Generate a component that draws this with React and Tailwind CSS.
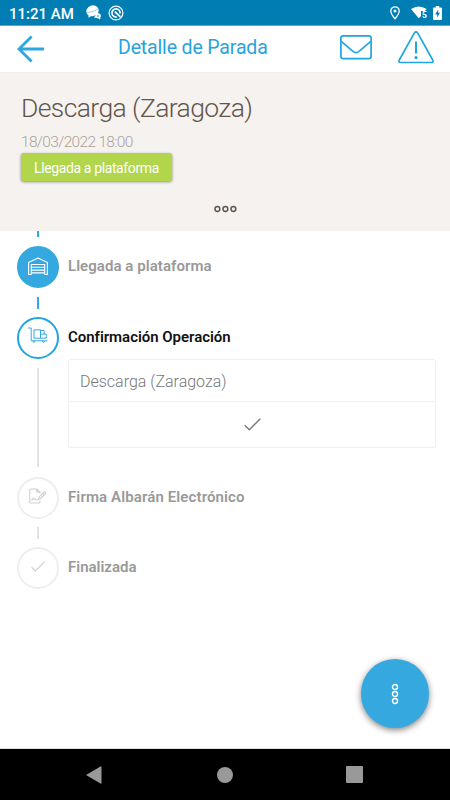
import React from 'react'

const ArrowIcon = () => (
  <svg width="28" height="28" viewBox="0 0 28 28" fill="none" stroke="#2ea7e0" strokeWidth="2.8">
    <path d="M14.6 1.6 2 14l12.6 12.4M2 14h25" />
  </svg>
)

const MailIcon = () => (
  <svg width="32" height="25" viewBox="0 0 32 25" fill="none" stroke="#21a5e0" strokeWidth="1.7" strokeLinejoin="round">
    <rect x="0.9" y="0.9" width="30.2" height="22.7" rx="2.2" />
    <path d="M1.2 6.4 12.4 15.8q4 3.6 7.2 0L30.8 6.4" />
  </svg>
)

const WarningIcon = () => (
  <svg width="36" height="33" viewBox="0 0 36 33" fill="none" stroke="#21a5e0" strokeWidth="1.7" strokeLinejoin="round">
    <path d="M16.4 1.9c.8-1.3 2.4-1.3 3.2 0L34.7 29c.8 1.3.1 2.5-1.4 2.5H2.7c-1.5 0-2.2-1.2-1.4-2.5Z" />
    <path d="M18 10.5v12" strokeWidth="2" />
    <circle cx="18" cy="26.6" r="1.6" fill="#21a5e0" stroke="none" />
  </svg>
)

const WarehouseIcon = () => (
  <svg width="20" height="18" viewBox="0 0 20 18" fill="none" stroke="#fff" strokeWidth="1.1">
    <path d="M3.3 17.5H.6v-12L10 1l9.4 4.5v12h-2.7" strokeLinejoin="round" />
    <path d="M3.3 17.5v-10h13.4v10M3.3 10.3h13.4M3.3 13.1h13.4M3.3 15.9h13.4" />
  </svg>
)

const CartIcon = () => (
  <svg width="20" height="17" viewBox="0 0 20 17" fill="none" stroke="#35a8e0" strokeWidth="1">
    <path d="M.2 1h3v12.8h16.3" />
    <path d="M6 2.8h6.5v8.4H6ZM12.5 3.5h3.6v3.6M12.5 7.1h5.8v4.1h-5.8" />
    <path d="M5 14v.8q.9 1.2 1.8 0V14M14.5 14v.8q.9 1.2 1.8 0V14" />
  </svg>
)

const SignIcon = () => (
  <svg width="18" height="16" viewBox="0 0 20 17" fill="none" stroke="#cfcfcf" strokeWidth="1.2" strokeLinejoin="round">
    <path d="M12.2 6V4L9 .8H1.8q-1 0-1 1v13.4q0 1 1 1h9.4q1 0 1-1v-1.6M8.6.8v3.6h3.6" />
    <path d="m10.5 12.5.8-2.7 5.4-5.5q.8-.7 1.5 0 .7.8 0 1.6l-5.3 5.5ZM15.3 5.6l1.8 1.7" />
    <path d="m2.8 13.6 2.1-3 1.2 2 1-1 1 1h2" />
  </svg>
)

const CheckIcon = ({ className }) => (
  <svg className={className} viewBox="0 0 17 13" fill="none" stroke="currentColor" strokeWidth="1.4">
    <path d="m.7 7.2 4.6 4.6L16.3.8" />
  </svg>
)

const StatusBar = () => (
  <div className="h-[26px] bg-[#007eb3] border-b border-[#5aa9cb] flex items-center text-white pl-[9px] pr-2">
    <span className="text-[15px] leading-[26px] font-medium w-[77px] pt-0.5 whitespace-nowrap">11:21 AM</span>
    <svg width="15" height="15" viewBox="0 0 15 15" fill="#fff">
      <ellipse cx="6.5" cy="5.8" rx="6.3" ry="5.3" transform="rotate(-20 6.5 5.8)" />
      <path d="M.5 7.6Q8 7.5 12.4 3.5" stroke="#007eb3" strokeWidth=".4" fill="none" />
      <path d="M2.5 9.5v3.3L6 10.5Z" />
      <path d="m8 12.5 3-4.5q3.5-.5 3.9 2.5L14 14.5l-2-1.2Z" />
      <circle cx="11.9" cy="11" r=".8" fill="#007eb3" />
    </svg>
    <svg className="ml-[7px]" width="16" height="16" viewBox="0 0 16 16" fill="none" stroke="#fff">
      <circle cx="8" cy="8" r="6.9" strokeWidth="1.2" />
      <path d="M8.8 12A4.1 4.1 0 1 1 12.1 8.5" strokeWidth="1.6" />
      <path d="m6.8 6.6 5.6 5.2" strokeWidth="1.8" />
    </svg>
    <div className="ml-auto flex items-center">
      <svg width="10" height="14" viewBox="0 0 10 14" fill="none" stroke="#fff" strokeWidth="1.3">
        <path d="M5 12.8Q.8 7.8.8 5a4.2 4.2 0 0 1 8.4 0Q9.2 7.8 5 12.8Z" />
        <circle cx="5" cy="5" r="1.5" fill="#fff" stroke="none" />
      </svg>
      <svg className="ml-[11px]" width="17" height="13" viewBox="0 0 17 13">
        <path d="M0 3Q7.8-2 15.6 3L13.8 5H10v5L7.8 12.3Z" fill="#fff" />
        <text x="11" y="12" fontSize="8.5" fontWeight="700" fill="#fff">5</text>
      </svg>
      <svg className="ml-[5px]" width="9" height="14" viewBox="0 0 9 14">
        <path d="M2.8 0h3.4v1.4H8q1 0 1 1V13q0 1-1 1H1q-1 0-1-1V2.4q0-1 1-1h1.8Z" fill="#fff" />
        <path d="M5.1 3.6 2.2 8.4h2v3.2l2.8-4.9H5.1Z" fill="#007eb3" />
      </svg>
    </div>
  </div>
)

const Header = () => (
  <div className="h-[46px] bg-white flex items-center pl-[17px] pr-4 pb-1">
    <span className="pt-1"><ArrowIcon /></span>
    <h1 className="ml-[73px] pt-px text-[19.5px] leading-none tracking-[-0.15px] text-[#27a4de] w-[222px] whitespace-nowrap">Detalle de Parada</h1>
    <MailIcon />
    <span className="ml-[26px]"><WarningIcon /></span>
  </div>
)

const Summary = () => (
  <div className="h-[159px] bg-[#f6f2ef] border-t border-[#f1eeeb] pl-[21px] flex flex-col items-start">
    <h2 className="mt-[19px] text-[26.5px] leading-8 font-light text-[#63554a] whitespace-nowrap tracking-[-0.6px]">Descarga (Zaragoza)</h2>
    <p className="mt-2 mb-px text-[15.5px] leading-5 font-light text-[#aaa39b] whitespace-nowrap tracking-[-0.68px]">18/03/2022 18:00</p>
    <button className="h-7 w-[151px] rounded-[3px] bg-[#b1d54b] text-white text-[14px] leading-[30px] tracking-[-0.38px] shadow-[0_1px_3px_rgba(0,0,0,0.45)] whitespace-nowrap">
      Llegada a plataforma
    </button>
    <svg className="mt-[24px] ml-[193px]" width="23" height="8" viewBox="0 0 23 8" fill="none" stroke="#62564c" strokeWidth="1.5">
      <circle cx="3.4" cy="4" r="2.4" />
      <circle cx="11.4" cy="4" r="2.4" />
      <circle cx="19.4" cy="4" r="2.4" />
    </svg>
  </div>
)

const steps = [
  {
    title: 'Llegada a plataforma',
    icon: <WarehouseIcon />,
    circle: 'bg-[#35a8e0] border-[#35a8e0] pb-[3px]',
    text: 'text-[#999] tracking-[0.06px]',
    line: 'h-3 mt-[9px] mb-2 bg-[#35a8e0]',
  },
  {
    title: 'Confirmación Operación',
    icon: <CartIcon />,
    circle: 'border-[#21a5e0] pb-[5px]',
    text: 'text-[#111] tracking-[-0.03px]',
    line: 'h-[99px] mt-[9px] mb-[10px] bg-[#e3e3e3]',
    detail: 'Descarga (Zaragoza)',
  },
  {
    title: 'Firma Albarán Electrónico',
    icon: <SignIcon />,
    circle: 'border-[#eee] pb-1',
    text: 'text-[#999] tracking-[0.12px]',
    line: 'h-3 mt-2 mb-2 bg-[#e3e3e3]',
  },
  {
    title: 'Finalizada',
    icon: <CheckIcon className="w-[14px] h-[11px] text-[#cfcfcf]" />,
    circle: 'border-[#eee] pb-1',
    text: 'text-[#999]',
  },
]

const Step = ({ step }) => (
  <div className="flex gap-[9px]">
    <div className="w-[42px] flex flex-col items-center shrink-0">
      <div className={`w-[42px] h-[42px] rounded-full border-2 flex items-center justify-center ${step.circle}`}>{step.icon}</div>
      {step.line && <div className={`w-0.5 ${step.line}`} />}
    </div>
    <div className="flex-1">
      <h3 className={`h-[42px] leading-[40px] text-[15px] font-semibold whitespace-nowrap ${step.text}`}>{step.title}</h3>
      {step.detail && (
        <div className="h-[89px] border border-[#eee] rounded-[3px]">
          <p className="h-[42px] border-b border-[#eee] pl-[11px] text-[16px] leading-[43px] text-[#777] font-light">{step.detail}</p>
          <div className="h-11 flex items-center justify-center">
            <CheckIcon className="w-[17px] h-[13px] text-[#777]" />
          </div>
        </div>
      )}
    </div>
  </div>
)

const NavBar = () => (
  <div className="h-[52px] bg-black border-t border-[#dedede] flex items-center justify-between pl-[86px] pr-[87px]">
    <svg width="16" height="18" viewBox="0 0 16 18" fill="#999">
      <path d="M0 9 14.5.5q1-.5 1 .5v16q0 1-1 .5Z" />
    </svg>
    <div className="w-4 h-4 ml-0.5 rounded-full bg-[#999]" />
    <div className="w-[17px] h-[17px] rounded-[1px] bg-[#999]" />
  </div>
)

const App = () => {
  return (
    <div className="w-[450px] h-[800px] overflow-hidden bg-white flex flex-col font-[Roboto,sans-serif]">
      <StatusBar />
      <Header />
      <Summary />
      <div className="relative flex-1 pl-[17px] pr-[14px]">
        <div className="w-0.5 h-1.5 ml-5 mb-[9px] bg-[#35a8e0]" />
        {steps.map((step) => (
          <Step key={step.title} step={step} />
        ))}
        <button className="absolute right-[21px] bottom-5 w-[68px] h-[69px] rounded-full bg-[#35a8e0] shadow-[0_2px_6px_rgba(0,0,0,0.5)] flex items-center justify-center">
          <svg width="8" height="22" viewBox="0 0 8 22" fill="none" stroke="#fff" strokeWidth="1.4">
            <circle cx="4" cy="4" r="2.5" />
            <circle cx="4" cy="11" r="2.5" />
            <circle cx="4" cy="18" r="2.5" />
          </svg>
        </button>
      </div>
      <NavBar />
    </div>
  )
}

export default App
